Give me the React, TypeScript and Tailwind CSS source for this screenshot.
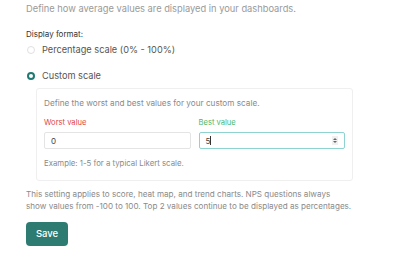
export default function App() {
  return (
    <div className="w-[397px] h-[254px] bg-white overflow-hidden" style={{ fontFamily: "Inter, 'Liberation Sans', sans-serif" }}>
      <div className="pl-[26px] pt-[3px]">
        <p className="text-[9.3px] leading-[12px] text-[#9a9a9a]">Define how average values are displayed in your dashboards.</p>
        <p className="mt-[14px] text-[8px] leading-[10px] text-[#333]">Display format:</p>
        <div className="mt-[5px] flex items-center gap-[7px] pl-[1px]">
          <span className="w-[8px] h-[8px] rounded-full border border-[#e0e0e0] bg-white" />
          <span className="text-[9.2px] leading-[12px] text-[#555]">Percentage scale (0% - 100%)</span>
        </div>
        <div className="mt-[14px] flex items-center gap-[7px] pl-[1px]">
          <span className="w-[8px] h-[8px] rounded-full border-[2.5px] border-[#1f7a74] bg-white" />
          <span className="text-[9.2px] leading-[12px] text-[#555]">Custom scale</span>
        </div>
        <div className="mt-[6px] ml-[10px] w-[317px] h-[93px] rounded-[3px] border border-[#efefef] px-[7px] pt-[8px]">
          <p className="text-[8.2px] leading-[12px] text-[#8a8a8a]">Define the worst and best values for your custom scale.</p>
          <div className="mt-[9px] flex gap-[8px]">
            <div className="flex-1">
              <p className="text-[7.6px] leading-[10px] text-[#e04848]">Worst value</p>
              <div className="mt-[4px] h-[17px] rounded-[2px] border border-[#e4e4e4] px-[6px] flex items-center text-[8px] text-[#444]">0</div>
            </div>
            <div className="flex-1">
              <p className="text-[7.6px] leading-[10px] text-[#4fb66a]">Best value</p>
              <div className="mt-[4px] h-[17px] rounded-[2px] border border-[#8fd3d0] px-[6px] flex items-center justify-between text-[8px] text-[#444]">
                <span className="flex items-center">5<span className="inline-block w-px h-[9px] bg-[#333]" /></span>
                <span className="w-[6px] h-[9px] bg-[#f0f0f0] flex flex-col items-center justify-center gap-[1px]">
                  <span className="w-0 h-0 border-l-[2px] border-r-[2px] border-b-[2px] border-l-transparent border-r-transparent border-b-[#666]" />
                  <span className="w-0 h-0 border-l-[2px] border-r-[2px] border-t-[2px] border-l-transparent border-r-transparent border-t-[#666]" />
                </span>
              </div>
            </div>
          </div>
          <p className="mt-[8px] text-[7.8px] leading-[12px] text-[#8a8a8a]">Example: 1-5 for a typical Likert scale.</p>
        </div>
        <p className="mt-[7px] text-[8.1px] leading-[12px] text-[#8a8a8a] whitespace-nowrap">This setting applies to score, heat map, and trend charts. NPS questions always<br />show values from -100 to 100. Top 2 values continue to be displayed as percentages.</p>
        <button className="mt-[10px] w-[42px] h-[24px] rounded-[4px] bg-[#2e7b72] text-white text-[9.5px] font-medium">Save</button>
      </div>
    </div>
  );
}
